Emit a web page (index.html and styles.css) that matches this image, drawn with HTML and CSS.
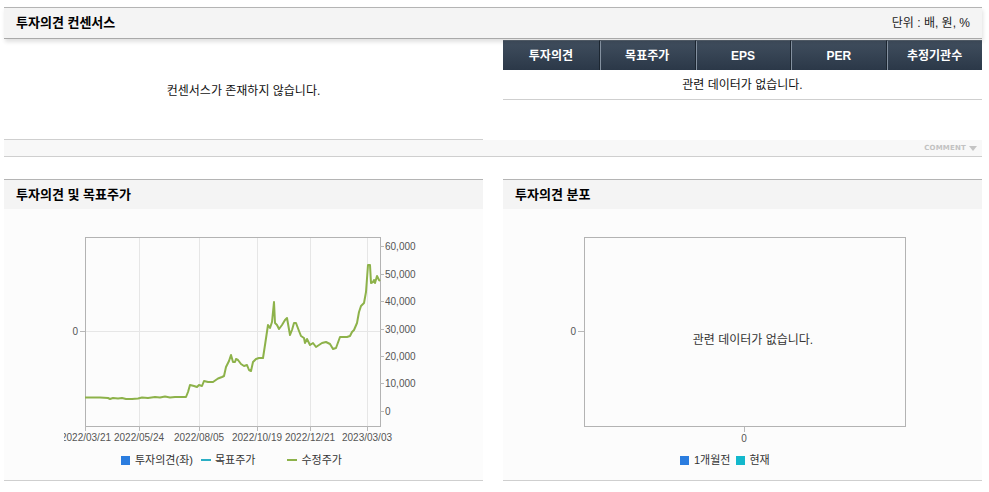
FILE: index.html
```html
<!DOCTYPE html>
<html lang="ko">
<head>
<meta charset="utf-8">
<title>투자의견 컨센서스</title>
<link rel="stylesheet" href="styles.css">
</head>
<body>
<div class="page">
  <section class="consensus">
    <div class="bar">
      <h2 class="bar-title">투자의견 컨센서스</h2>
      <span class="unit">단위 : 배, 원, %</span>
    </div>
    <div class="cons-body">
      <div class="cons-left"><p class="empty">컨센서스가 존재하지 않습니다.</p></div>
      <div class="cons-right">
        <table class="cons-table">
          <thead>
            <tr><th>투자의견</th><th>목표주가</th><th>EPS</th><th>PER</th><th>추정기관수</th></tr>
          </thead>
          <tbody>
            <tr><td colspan="5">관련 데이터가 없습니다.</td></tr>
          </tbody>
        </table>
      </div>
    </div>
    <div class="comment-strip"><span class="comment">COMMENT</span><i class="tri"></i></div>
  </section>

  <div class="charts">
    <section class="panel">
      <div class="panel-head"><h3 class="panel-title">투자의견 및 목표주가</h3></div>
      <div class="panel-body">
        <svg class="chart chart-left" width="360" height="240" viewBox="0 0 360 240">
          <g class="grid">
            <line x1="75.5" y1="28" x2="75.5" y2="217"/>
            <line x1="135.5" y1="28" x2="135.5" y2="217"/>
            <line x1="193.5" y1="28" x2="193.5" y2="217"/>
            <line x1="246.5" y1="28" x2="246.5" y2="217"/>
            <line x1="303.5" y1="28" x2="303.5" y2="217"/>
            <line x1="21" y1="122.5" x2="316" y2="122.5"/>
          </g>
          <rect class="frame" x="21.5" y="28.5" width="295" height="189"/>
          <g class="ticks">
            <line x1="21.5" y1="217" x2="21.5" y2="222"/>
            <line x1="75.5" y1="217" x2="75.5" y2="222"/>
            <line x1="135.5" y1="217" x2="135.5" y2="222"/>
            <line x1="193.5" y1="217" x2="193.5" y2="222"/>
            <line x1="246.5" y1="217" x2="246.5" y2="222"/>
            <line x1="303.5" y1="217" x2="303.5" y2="222"/>
            <line x1="16" y1="122.5" x2="21" y2="122.5"/>
            <line x1="316" y1="37.5" x2="320" y2="37.5"/>
            <line x1="316" y1="65.5" x2="320" y2="65.5"/>
            <line x1="316" y1="92.5" x2="320" y2="92.5"/>
            <line x1="316" y1="120.5" x2="320" y2="120.5"/>
            <line x1="316" y1="147.5" x2="320" y2="147.5"/>
            <line x1="316" y1="174.5" x2="320" y2="174.5"/>
            <line x1="316" y1="202.5" x2="320" y2="202.5"/>
          </g>
          <g class="axis-text">
            <text x="14" y="126" text-anchor="end">0</text>
            <text x="321" y="41">60,000</text>
            <text x="321" y="69">50,000</text>
            <text x="321" y="96">40,000</text>
            <text x="321" y="124">30,000</text>
            <text x="321" y="151">20,000</text>
            <text x="321" y="178">10,000</text>
            <text x="321" y="206">0</text>
            <text x="22" y="232" text-anchor="middle">2022/03/21</text>
            <text x="75" y="232" text-anchor="middle">2022/05/24</text>
            <text x="135" y="232" text-anchor="middle">2022/08/05</text>
            <text x="193" y="232" text-anchor="middle">2022/10/19</text>
            <text x="246" y="232" text-anchor="middle">2022/12/21</text>
            <text x="303" y="232" text-anchor="middle">2023/03/03</text>
          </g>
          <polyline class="price" points="21,188.5 36,188.5 44,189 46,190 49,189 54,189.5 58,189 62,190 68,190 74,189.5 78,188.5 84,189 91,188 96,188.5 101,187.5 106,188.5 111,188 116,188 122,188 124,183 126,176 130,177 133,178 135,176 138,177 140,172 144,173 149,173 154,169.5 158,168 160,167 162,158 165,152 167,146 169,153 171,153 172,150 174,151 177,155 180,157 183,156 185,161 187,162 189,153 192,150 195,149 197,149 199,149 201,136 204,116 206,119 208,113 210,93 211,114 213,116 215,120 218,116 221,111 223,109 226,126 228,121 230,114 232,114 235,122 237,127 240,129 241,134 243,130 246,136 249,134 252,138 255,136 258,134 262,133 266,135 269,140 272,139 276,128 279,128 283,128 286,127 288,123 290,121 293,114 295,103 297,97 300,94 302,83 304,56 306,56 307,74 309,73 310,71 311,74 313,67 315,71 316,72"/>
        </svg>
        <div class="legend legend-left">
          <span class="lg-item"><i class="sw sw-blue"></i>투자의견(좌)</span>
          <span class="lg-item lg-target"><i class="ln ln-teal"></i>목표주가</span>
          <span class="lg-item lg-price"><i class="ln ln-green"></i>수정주가</span>
        </div>
      </div>
    </section>

    <section class="panel">
      <div class="panel-head"><h3 class="panel-title">투자의견 분포</h3></div>
      <div class="panel-body">
        <svg class="chart chart-right" width="479" height="240" viewBox="0 0 479 240">
          <rect class="frame" x="81.5" y="28.5" width="321" height="189"/>
          <g class="ticks">
            <line x1="75" y1="122.5" x2="81" y2="122.5"/>
            <line x1="241.5" y1="218" x2="241.5" y2="223"/>
          </g>
          <g class="axis-text">
            <text x="73" y="126" text-anchor="end">0</text>
            <text x="241" y="233" text-anchor="middle">0</text>
          </g>
          <text class="nodata" x="250" y="135" text-anchor="middle">관련 데이터가 없습니다.</text>
        </svg>
        <div class="legend legend-right">
          <span class="lg-item"><i class="sw sw-blue"></i>1개월전</span>
          <span class="lg-item lg-now"><i class="sw sw-teal"></i>현재</span>
        </div>
      </div>
    </section>
  </div>
</div>
</body>
</html>
```

FILE: styles.css
```css
html, body {
  margin: 0;
  padding: 0;
  background: #ffffff;
}

body {
  font-family: "Liberation Sans", "Noto Sans CJK KR", sans-serif;
  font-size: 12px;
  color: #111;
}

.page {
  width: 978px;
  padding: 7px 0 0 4px;
}

/* ---------- consensus block ---------- */
.bar {
  position: relative;
  z-index: 1;
  height: 30px;
  border-top: 1px solid #b4b4b4;
  border-bottom: 1px solid #a9a9a9;
  background: #f4f4f4;
  box-shadow: 1px 3px 4px rgba(0, 0, 0, 0.12);
  display: flex;
  align-items: center;
  justify-content: space-between;
  padding: 0 12px;
}

.bar-title,
.panel-title {
  margin: 0;
  font-size: 13px;
  font-weight: bold;
  line-height: 16px;
  color: #000;
}

.unit {
  font-size: 12px;
  line-height: 16px;
  color: #222;
}

.cons-body {
  display: flex;
  gap: 20px;
}

.cons-left {
  width: 479px;
  height: 100px;
  border-bottom: 1px solid #cfcfcf;
  display: flex;
  align-items: center;
  justify-content: center;
}

.empty {
  margin: 4px 0 0;
  line-height: 16px;
  color: #111;
}

.cons-right {
  width: 479px;
  padding-top: 1px;
}

.cons-table {
  width: 100%;
  border-collapse: separate;
  border-spacing: 0;
  table-layout: fixed;
}

.cons-table th {
  height: 30px;
  padding: 0;
  background: linear-gradient(#404e5e, #2b3848);
  color: #fff;
  font-size: 12px;
  font-weight: bold;
  line-height: 14px;
  text-align: center;
  border-top: 1px solid #56616d;
  box-sizing: border-box;
}

.cons-table th + th {
  border-left: 1px solid #1c2631;
  box-shadow: inset 1px 0 0 #8491a0;
}

.cons-table td {
  height: 29px;
  padding: 0;
  text-align: center;
  line-height: 16px;
  color: #111;
  border-bottom: 1px solid #cfcfcf;
}

.comment-strip {
  height: 16px;
  background: #f8f8f8;
  border-bottom: 1px solid #cfcfcf;
  display: flex;
  align-items: center;
  justify-content: flex-end;
  padding-right: 5px;
}

.comment {
  font-family: "DejaVu Sans", sans-serif;
  font-size: 7px;
  font-weight: bold;
  letter-spacing: 0.2px;
  color: #c2c2c2;
  line-height: 10px;
}

.tri {
  display: block;
  width: 0;
  height: 0;
  margin-left: 3px;
  border-left: 4px solid transparent;
  border-right: 4px solid transparent;
  border-top: 5px solid #c4c4c4;
}

/* ---------- chart panels ---------- */
.charts {
  display: flex;
  gap: 20px;
  margin-top: 22px;
}

.panel {
  width: 479px;
}

.panel-head {
  height: 29px;
  border-top: 1px solid #b4b4b4;
  background: #f4f4f4;
  display: flex;
  align-items: center;
  padding-left: 12px;
}

.panel-body {
  height: 271px;
  background: #fcfcfc;
  border-bottom: 1px solid #cfcfcf;
}

.chart {
  display: block;
  overflow: hidden;
}

.chart-left {
  margin-left: 60px;
}

.grid line {
  stroke: #e6e6e6;
  stroke-width: 1;
}

.frame {
  fill: none;
  stroke: #b3b3b3;
  stroke-width: 1;
}

.ticks line {
  stroke: #b8b8b8;
  stroke-width: 1;
}

.axis-text text {
  font-family: "Liberation Sans", sans-serif;
  font-size: 10px;
  fill: #555;
}

.nodata {
  font-family: "Liberation Sans", "Noto Sans CJK KR", sans-serif;
  font-size: 12px;
  fill: #333;
}

.price {
  fill: none;
  stroke: #8db24a;
  stroke-width: 2;
  stroke-linejoin: round;
}

.legend {
  height: 22px;
  display: flex;
  align-items: center;
  font-size: 11px;
  color: #333;
}

.legend-left {
  padding-left: 117px;
}

.legend-right {
  padding-left: 177px;
}

.lg-item {
  display: flex;
  align-items: center;
  line-height: 14px;
  white-space: nowrap;
}

.lg-target {
  margin-left: 8px;
}

.lg-price {
  margin-left: 32px;
}

.lg-now {
  margin-left: 6px;
}

.sw {
  display: block;
  width: 9px;
  height: 9px;
  margin-right: 5px;
}

.sw-blue {
  background: #2b7ddf;
}

.sw-teal {
  background: #13b8cc;
  margin-right: 4px;
}

.ln {
  display: block;
  width: 10px;
  height: 2px;
  margin-right: 4px;
}

.ln-teal {
  background: #2aaec4;
}

.ln-green {
  background: #8db24a;
}
```
